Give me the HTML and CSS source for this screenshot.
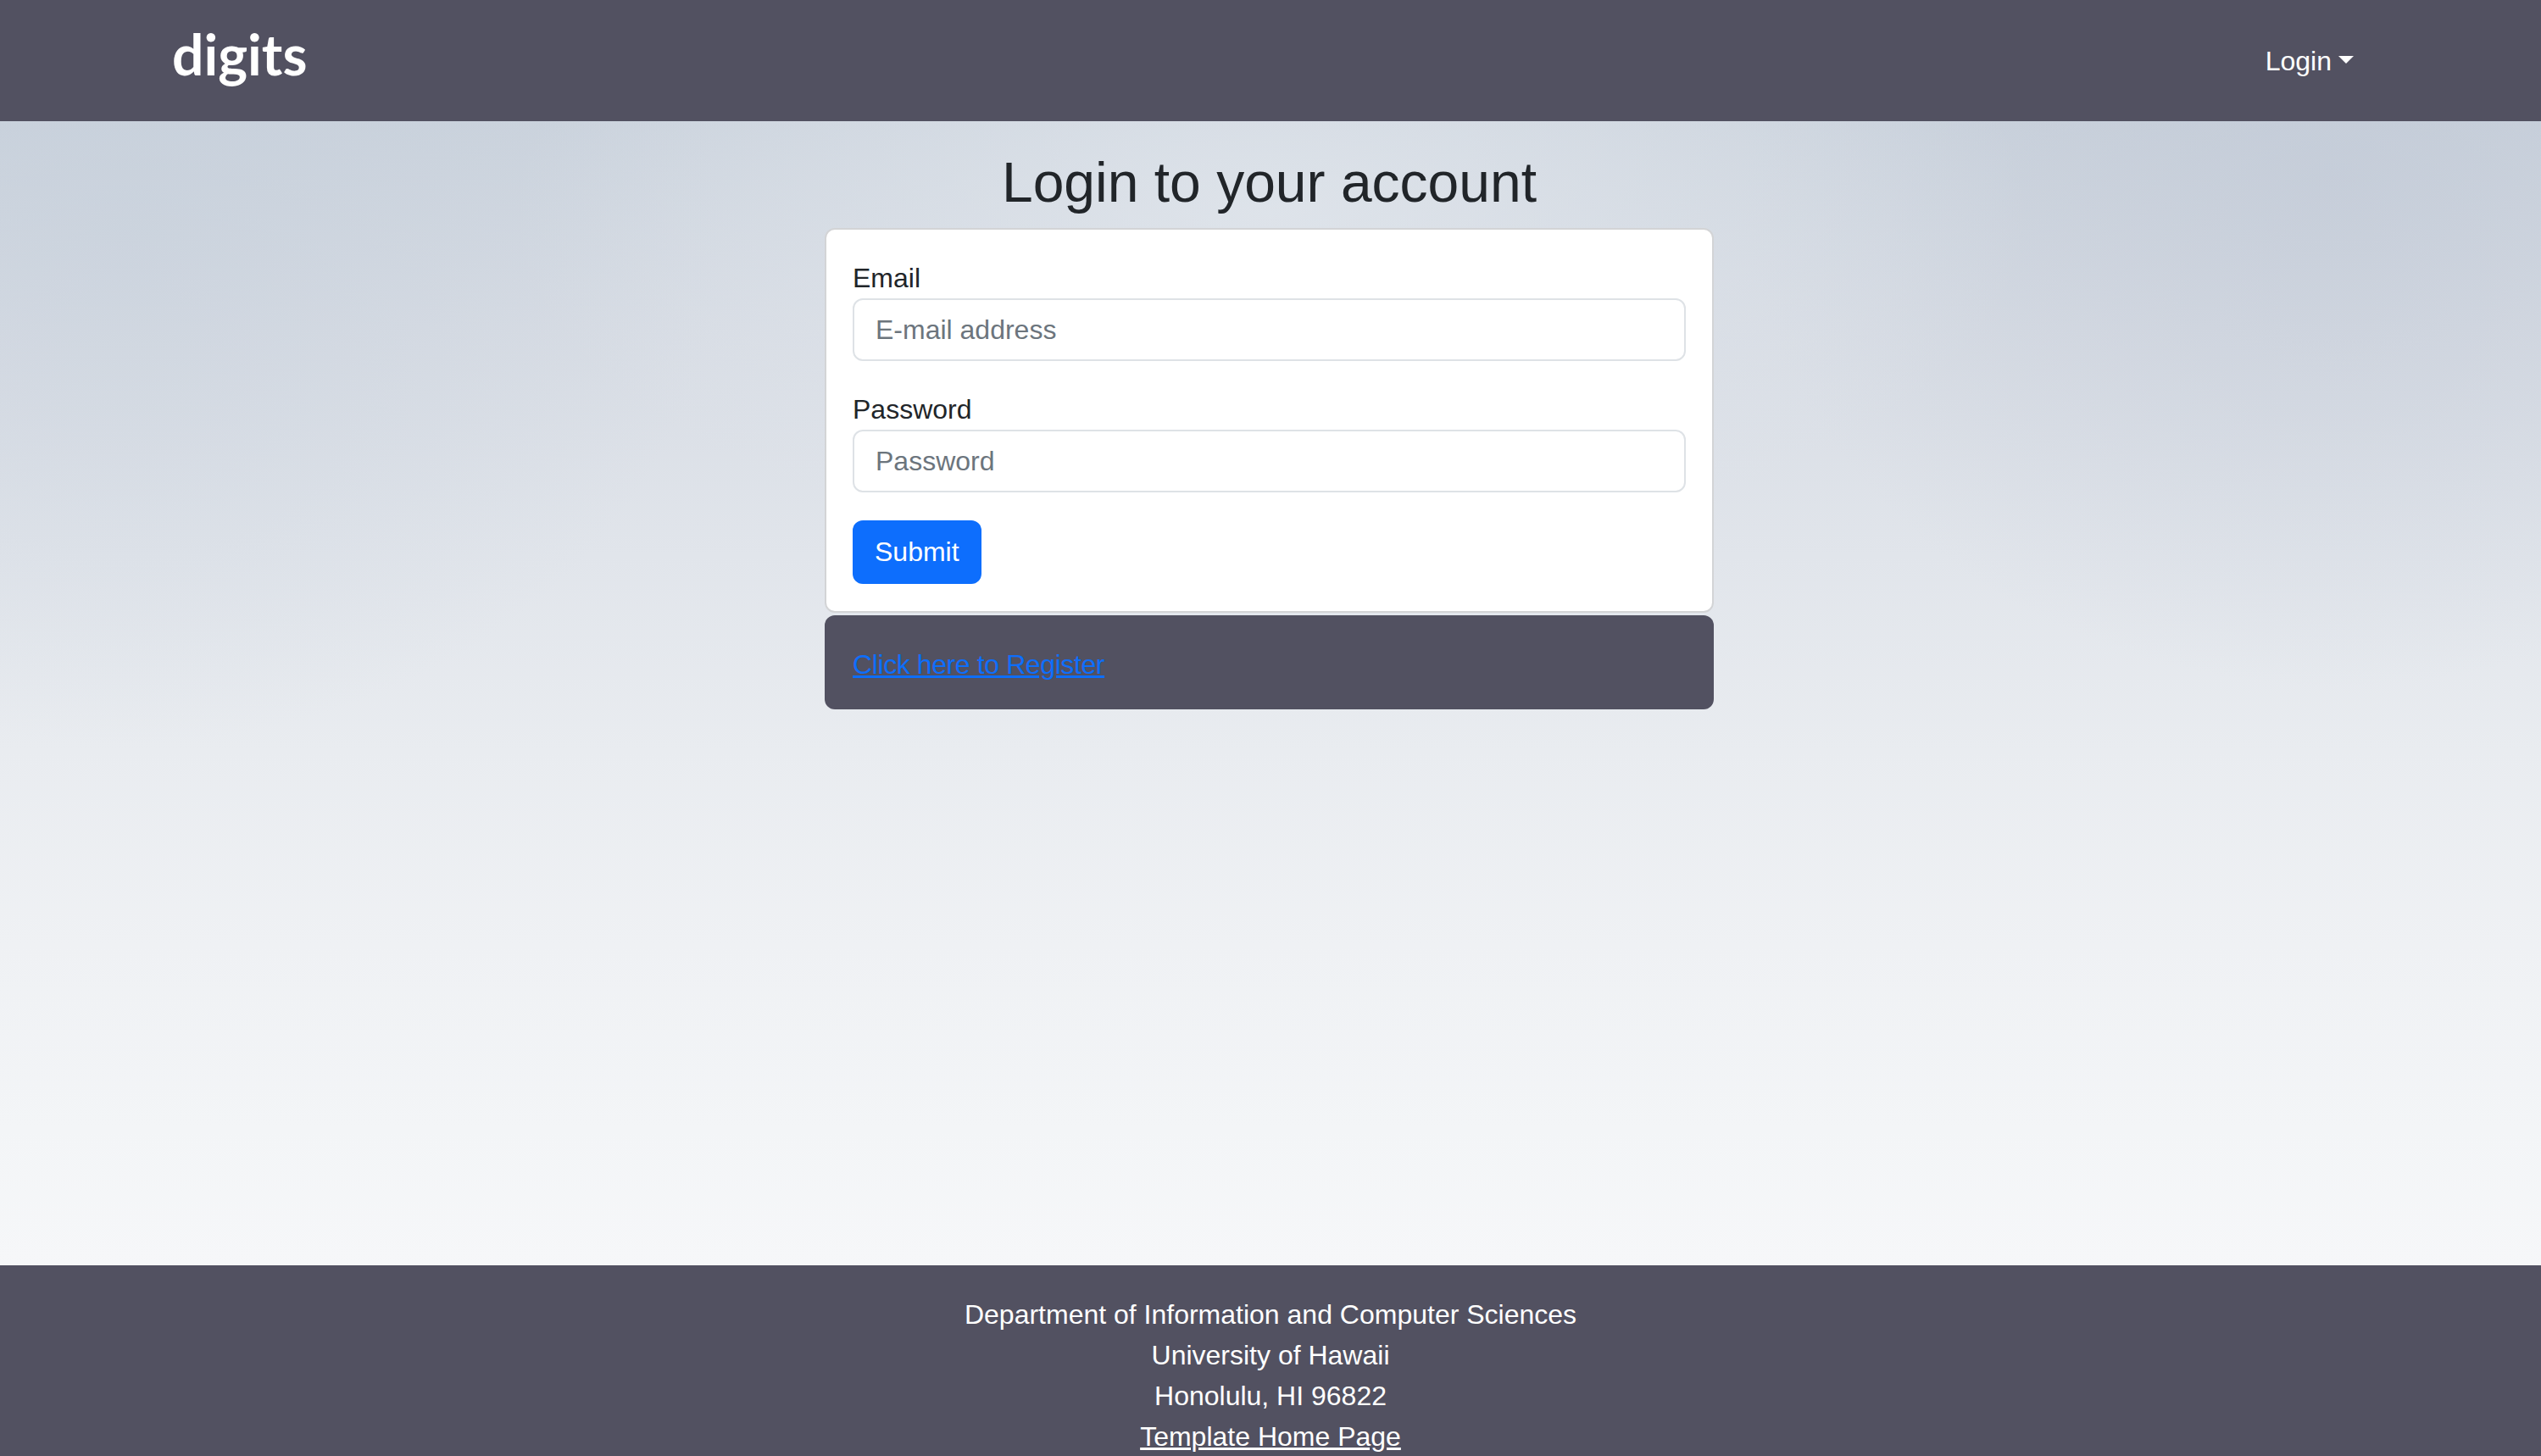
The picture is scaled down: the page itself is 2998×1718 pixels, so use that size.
FILE: index.html
```html
<!DOCTYPE html>
<html lang="en">
<head>
<meta charset="utf-8">
<title>digits</title>
<link rel="stylesheet" href="styles.css">
</head>
<body>
<nav class="navbar">
  <a class="brand" href="#">digits</a>
  <a class="nav-login" href="#">Login<span class="caret"></span></a>
</nav>
<main class="main">
  <div class="container">
    <h2 class="title">Login to your account</h2>
    <form class="card">
      <label class="form-label" for="email">Email</label>
      <input class="form-input" id="email" type="text" placeholder="E-mail address">
      <label class="form-label" for="password">Password</label>
      <input class="form-input" id="password" type="password" placeholder="Password">
      <button class="btn-submit" type="button">Submit</button>
    </form>
    <div class="register">
      <a class="register-link" href="#">Click here to Register</a>
    </div>
  </div>
</main>
<footer class="footer">
  <div>Department of Information and Computer Sciences</div>
  <div>University of Hawaii</div>
  <div>Honolulu, HI 96822</div>
  <div><a class="footer-link" href="#">Template Home Page</a></div>
</footer>
</body>
</html>
```
FILE: styles.css
```css
* {
  box-sizing: border-box;
}

html, body {
  margin: 0;
  padding: 0;
}

body {
  font-family: "Liberation Sans", Arial, sans-serif;
  font-size: 32px;
  line-height: 48px;
  color: #212529;
  background: #f5f6f8;
}

.navbar {
  height: 143px;
  background: #525161;
  display: flex;
  align-items: center;
  justify-content: space-between;
  padding: 0 221px 0 203px;
}

.brand {
  font-family: Lato, "Liberation Sans", sans-serif;
  font-weight: 700;
  font-size: 66px;
  line-height: 79px;
  color: #ffffff;
  text-decoration: none;
  padding-bottom: 16px;
}

.nav-login {
  color: #ffffff;
  text-decoration: none;
  font-size: 32px;
  line-height: 48px;
}

.caret {
  display: inline-block;
  margin-left: 8px;
  vertical-align: 8px;
  width: 0;
  height: 0;
  border-top: 9px solid #ffffff;
  border-left: 9px solid transparent;
  border-right: 9px solid transparent;
}

.main {
  min-height: 1350px;
  padding: 33px 3px 0 0;
  background:
    radial-gradient(ellipse 900px 420px at 50% 8%, rgba(226, 231, 237, 0.75), rgba(226, 231, 237, 0) 100%),
    radial-gradient(ellipse 700px 600px at 92% 5%, rgba(190, 198, 212, 0.5), rgba(190, 198, 212, 0) 100%),
    radial-gradient(ellipse 700px 600px at 5% 10%, rgba(196, 206, 218, 0.45), rgba(196, 206, 218, 0) 100%),
    linear-gradient(180deg, #cbd3dd 0%, #d7dce4 18%, #e1e5eb 38%, #e9ecf0 55%, #eff1f4 72%, #f3f5f7 88%, #f6f7f9 100%);
}

.container {
  width: 1049px;
  margin: 0 auto;
}

.title {
  margin: 0 0 14px;
  font-size: 66px;
  line-height: 79px;
  font-weight: 400;
  text-align: center;
  color: #212529;
}

.card {
  display: block;
  margin: 0;
  background: #ffffff;
  border: 2px solid #d3d4d6;
  border-radius: 12px;
  padding: 33px 31px 32px;
}

.form-label {
  display: block;
  line-height: 48px;
  color: #212529;
}

.form-input {
  display: block;
  width: 100%;
  height: 74px;
  margin: 0 0 33px;
  padding: 11px 25px;
  font-family: inherit;
  font-size: 32px;
  line-height: 48px;
  color: #212529;
  background: #ffffff;
  border: 2px solid #dee2e6;
  border-radius: 12px;
  outline: none;
}

.form-input::placeholder {
  color: #6c757d;
}

.btn-submit {
  display: inline-block;
  height: 75px;
  padding: 13px 26px 14px;
  font-family: inherit;
  font-size: 32px;
  line-height: 48px;
  color: #ffffff;
  background: #0d6efd;
  border: 0;
  border-radius: 12px;
}

.register {
  margin-top: 3px;
  height: 111px;
  padding: 34px 33px 29px;
  background: #525161;
  border-radius: 12px;
}

.register-link {
  color: #0d6efd;
  text-decoration: underline;
  letter-spacing: -0.4px;
}

.footer {
  height: 225px;
  overflow: hidden;
  background: #525161;
  color: #ffffff;
  text-align: center;
  padding-top: 34px;
}

.footer-link {
  color: #ffffff;
  text-decoration: underline;
}
```
